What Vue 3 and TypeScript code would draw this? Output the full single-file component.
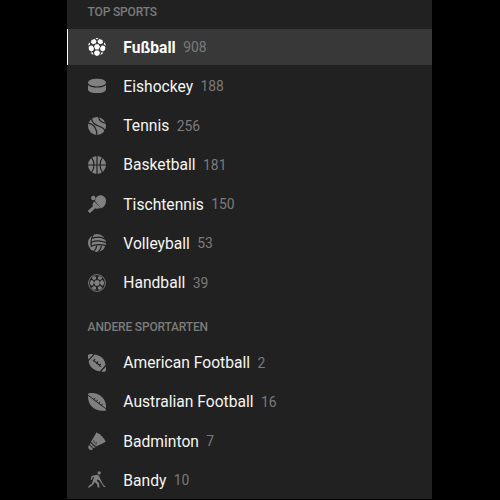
<script setup lang="ts">
type Shape = { d: string; stroke?: boolean; w?: number; cut?: boolean }
interface Sport { name: string; count: number; icon: string; active?: boolean }
interface Group { title: string; items: Sport[] }

const groups: Group[] = [
  {
    title: 'TOP SPORTS',
    items: [
      { name: 'Fußball', count: 908, icon: 'soccer', active: true },
      { name: 'Eishockey', count: 188, icon: 'puck' },
      { name: 'Tennis', count: 256, icon: 'tennis' },
      { name: 'Basketball', count: 181, icon: 'basketball' },
      { name: 'Tischtennis', count: 150, icon: 'paddle' },
      { name: 'Volleyball', count: 53, icon: 'volleyball' },
      { name: 'Handball', count: 39, icon: 'handball' },
    ],
  },
  {
    title: 'ANDERE SPORTARTEN',
    items: [
      { name: 'American Football', count: 2, icon: 'american' },
      { name: 'Australian Football', count: 16, icon: 'australian' },
      { name: 'Badminton', count: 7, icon: 'shuttle' },
      { name: 'Bandy', count: 10, icon: 'bandy' },
    ],
  },
]

const disc = 'M9 0a9 9 0 1 0 0 18A9 9 0 0 0 9 0z'

const icons: Record<string, Shape[]> = {
  soccer: [
    { d: 'M7.500 6.200h3l1.500 2.600-1.500 2.700h-3L6 8.800zM3.600 1.900L6.700 1.100 8.500 2.900 7.800 5.300 5.200 6.300 2.900 4.700zM14.400 1.900L11.300 1.100 9.500 2.900l.7 2.400 2.600 1 2.300-1.600zM1.700 7.700L4.200 7.500 6 9.900 5.400 12.400 3.100 13.500 1 12 .6 9.400zM16.300 7.700L13.800 7.500 12 9.900l.6 2.500 2.300 1.100L17 12l.4-2.600zM7.500 12.500h3l1.500 2-.8 2.500L9 18l-2.200-1L6 14.500z' },
    { d: 'M7.400.1Q9-.1 10.600.1L9 1.500zM1.500 4.300l.7 2L.1 7.700Q.3 6 1.500 4.300zM16.500 4.300l-.7 2 2.100 1.400q-.2-1.700-1.400-3.400zM2.600 14.700l2-.5 1 2.700Q3.800 16.300 2.600 14.700zM15.400 14.700l-2-.5-1 2.700q1.800-.6 3-2.200z' },
  ],
  puck: [
    { d: 'M9 1.800c5 0 9 1.600 9 3.800S14 9.400 9 9.400 0 7.800 0 5.600s4-3.800 9-3.800z' },
    { d: 'M0 8c1.800 1.900 5 2.500 9 2.500S16.200 9.900 18 8v4.400c0 2.100-4 3.700-9 3.700s-9-1.600-9-3.700z' },
  ],
  tennis: [
    { d: disc },
    { d: 'M3.200 1.500C4.500 6 7.200 7.900 10.400 9s5.800 2.600 7 5.200M0 6.200c3.100.4 5.400 1.900 6.900 4.200 1.500 2.300 2 4.600 2 7.600M10.700 0c.2 3.200 2.600 5.600 7.300 6.200', stroke: true, w: 1.2, cut: true },
  ],
  basketball: [
    { d: disc },
    { d: 'M9 0v18M0 9h18M3.400 1.300c3.400 4 3.400 11.400 0 15.400M14.600 1.300c-3.400 4-3.400 11.400 0 15.400', stroke: true, w: 1.2, cut: true },
  ],
  paddle: [
    { d: 'M7 6.100C7.500 2.300 9.500.2 12.400.2c3.400 0 5.600 2.500 5.600 5.800 0 2-.8 3.900-2.200 5.400L13.100 13.400z' },
    { d: 'M6.300 6.400l6.400 6.500c-1.700.7-4.200.9-5.900.6L2.700 17.500c-.5.500-1 .5-1.500 0l-.8-.8c-.5-.5-.5-1 0-1.500L4.900 11.200C4.200 9.500 4.900 7.600 6.300 6.400z' },
    { d: 'M5.300.8a2.200 2.200 0 1 0 0 4.400 2.200 2.200 0 0 0 0-4.400z' },
  ],
  volleyball: [
    { d: disc },
    { d: 'M5.300.5C2.900 4.500 2.400 8.500 3.600 13M4.500 4.400c4-1.700 9-1.400 13.200 1M3.500 8.300c4.200-1.900 9.800-1.500 14.500.2M3.400 12c4.500-1.400 9.900-1.800 15-.1M8.700 11.800c-.2 2.600-1.500 4.500-3.500 6.200M13.500 11.800c-.3 2.500-1.700 4.600-3.600 6.500', stroke: true, w: 1.25, cut: true },
  ],
  handball: [
    { d: 'M9 .6a8.400 8.400 0 1 0 0 16.800A8.400 8.400 0 0 0 9 .6z', stroke: true, w: 0.9 },
    { d: 'M7.500 6.200h3l1.500 2.800-1.500 2.800h-3L6 9zM3 6.300h2L6 8.800l-1.200 2.800H3L1.700 9zM15 6.300h-2L12 8.800l1.200 2.800H15L16.300 9zM5 2.500l2.300-.3 1 1.800-1.100 1.700H5.100L3.900 4zM13 2.500l-2.300-.3-1 1.800 1.100 1.700h2.100L14.100 4zM5 15.500l2.300.3 1-1.800-1.100-1.700H5.100L3.900 14zM13 15.500l-2.300.3-1-1.800 1.100-1.700h2.100l1.200 1.700z' },
  ],
  american: [
    { d: 'M.2.800C1.700 0 3.500-.1 5.100.4L.5 5.400C-.1 4-.2 2.300.2.800zM6.700.6c5.700.7 10.500 4.800 10.800 10.400l-5.700 6.200C6 16.700.9 12.400.7 6.900zM17.800 12.700c.3 1.600.3 3-.1 4.500-1.500.6-3 .6-4.400.3z' },
    { d: 'M5 5.900l8 6.600M5.200 7.500l1.900-2.400M8.100 9.900L10 7.500M10.900 12.300l1.900-2.400', stroke: true, w: 1.1, cut: true },
  ],
  australian: [
    { d: 'M.2.5C5.200-.6 10.600.5 14 4c3.600 3.700 4.700 8.500 3.900 13.500-5 .9-10.400-.2-13.900-3.700C.5 10.300-.5 5.500.2.500z' },
    { d: 'M0 2.200l18 13.600M5.400 7.200l1.800-2.300M7.900 9.100l1.800-2.300M10.400 11l1.800-2.300M12.900 12.900l1.500-2', stroke: true, w: 1, cut: true },
  ],
  shuttle: [
    { d: 'M8.600.2L10.600 1.800 12 2l.8 1.500 1.500.8.5 1.500 1.500.9.300 1.400 1.300 1.300-2.400 1.500-8.200 3.800-4.400-4.600z' },
    { d: 'M2.400 10.700l5 5-2 .4-3.500-3.500zM1.100 12.900l4 4c-1.200 1.200-2.700 1.400-4 .3-1.200-1.300-1.200-2.900 0-4.300z' },
    { d: 'M5.600 8.300l.9 2.600M8.200 9.900l-.3 2.900M2.600 10l5.600 5', stroke: true, w: 0.8, cut: true },
  ],
  bandy: [
    { d: 'M11.200.3a1.650 1.650 0 1 0 0 3.300 1.650 1.650 0 0 0 0-3.300z' },
    { d: 'M5.400 4.600L9.600 3.700 11.200 4.900 12.200 7.700 15.200 13.500 17.900 15.900H15.800L11.300 9.300 9.400 8.500 8.800 9.600 11 12.300 11.600 16.500H9.600L9.100 13.300 6.700 10.900 5.300 13.500 1.400 16.500H.1L.5 15.200 3.900 12.400 6.200 6 4.800 6.300 4 9 2.700 8.600 3.600 5.100z' },
  ],
}
</script>

<template>
  <nav class="panel">
    <section v-for="group in groups" :key="group.title" class="group">
      <h2 class="title">{{ group.title }}</h2>
      <ul class="list">
        <li v-for="item in group.items" :key="item.name" class="row" :class="{ active: item.active }">
          <svg class="icon" viewBox="0 0 18 18" aria-hidden="true">
            <path
              v-for="(shape, i) in icons[item.icon]"
              :key="i"
              :d="shape.d"
              :class="{ line: shape.stroke, cut: shape.cut }"
              :stroke-width="shape.w"
            />
          </svg>
          <span class="name">{{ item.name }}</span>
          <span class="count">{{ item.count }}</span>
        </li>
      </ul>
    </section>
  </nav>
</template>

<style>
body {
  background: #000;
}
</style>

<style scoped>
.panel {
  box-sizing: border-box;
  width: 365px;
  height: 499px;
  margin-left: 67px;
  overflow: hidden;
  background: #212121;
  font-family: Roboto, 'Liberation Sans', sans-serif;
}
.title {
  box-sizing: border-box;
  height: 29px;
  margin: 0;
  padding: 4px 0 0 20.6px;
  color: #7b7b7b;
  font-size: 12px;
  line-height: 17px;
  font-weight: 500;
  letter-spacing: -0.17px;
}
.group + .group .title {
  height: 44px;
  padding-top: 18px;
}
.list {
  display: flex;
  flex-direction: column;
  gap: 3.25px;
  margin: 0;
  padding: 0;
  list-style: none;
}
.row {
  display: flex;
  align-items: center;
  box-sizing: border-box;
  height: 36px;
  padding-left: 20.6px;
  color: #f5f5f5;
  font-size: 15.64px;
  line-height: 20px;
}
.active {
  padding-left: 19.6px;
  border-left: 1px solid #fff;
  background: #383838;
  color: #fff;
}
.icon {
  width: 18px;
  height: 18px;
  margin-right: 17.7px;
  overflow: hidden;
  fill: #808080;
}
.active .icon {
  fill: #fff;
}
.line {
  fill: none;
  stroke: #808080;
}
.cut {
  stroke: #212121;
}
.name {
  padding-top: 1px;
}
.active .name {
  font-weight: 700;
}
.count {
  margin-left: 7.4px;
  color: #7b7b7b;
  font-size: 13.9px;
}
</style>
